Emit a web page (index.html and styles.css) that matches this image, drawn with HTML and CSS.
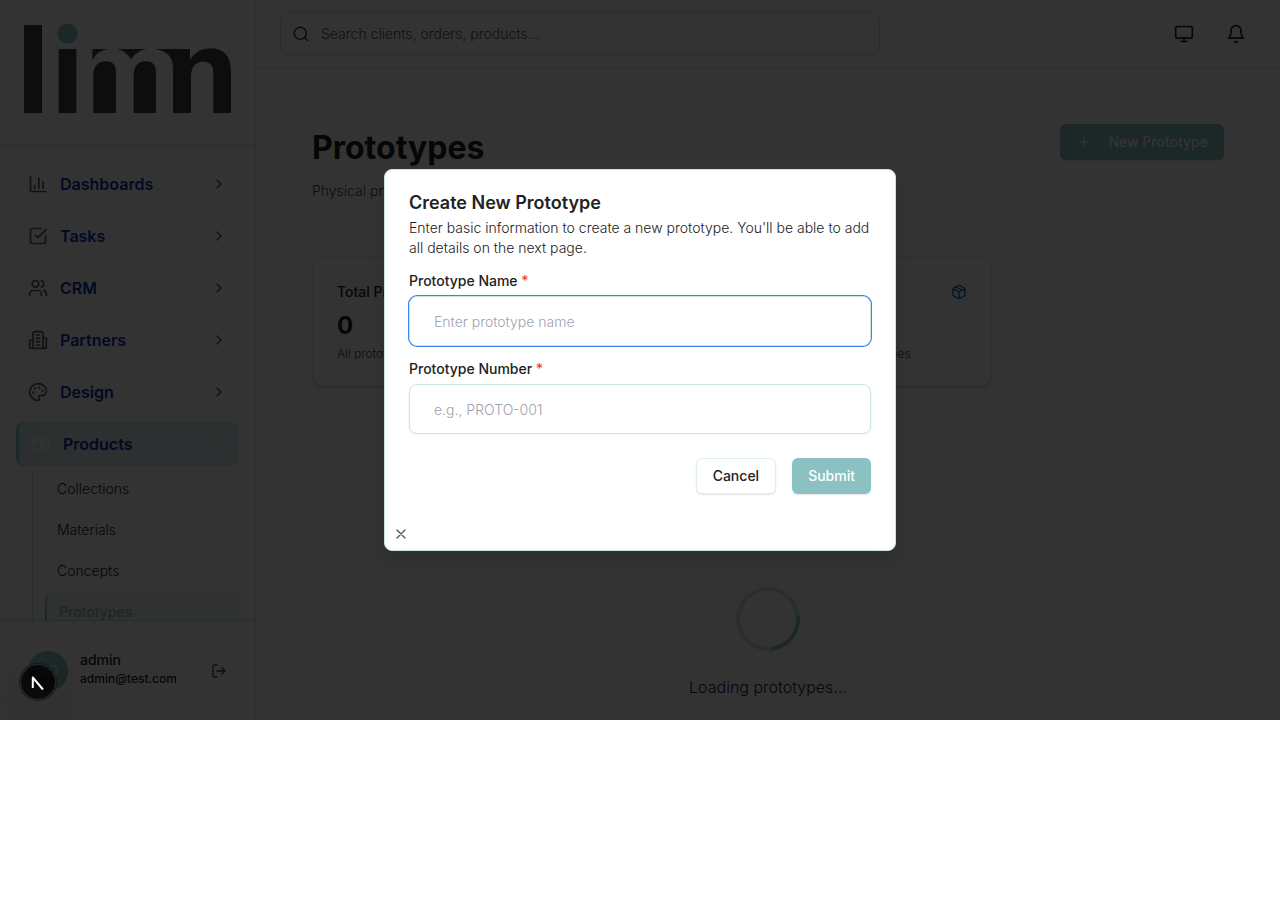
FILE: index.html
```html
<!DOCTYPE html>
<html lang="en">
<head>
<meta charset="utf-8">
<title>Prototypes</title>
<link rel="stylesheet" href="styles.css">
</head>
<body>
<svg class="sprite" aria-hidden="true">
  <symbol id="chevron" viewBox="0 0 24 24"><path d="m9 18 6-6-6-6"/></symbol>
  <symbol id="box" viewBox="0 0 24 24"><path d="m7.5 4.27 9 5.15M21 8a2 2 0 0 0-1-1.73l-7-4a2 2 0 0 0-2 0l-7 4A2 2 0 0 0 3 8v8a2 2 0 0 0 1 1.73l7 4a2 2 0 0 0 2 0l7-4A2 2 0 0 0 21 16ZM3.3 7l8.7 5 8.7-5M12 22V12"/></symbol>
</svg>
<div class="shell">
  <aside class="sidebar">
    <div class="brand">
      <svg class="logo" viewBox="72 72 621 291" role="img" aria-label="limn">
        <path d="M72 75h54v264H72zM176 147h53v192h-53z"/>
        <circle class="logo-dot" cx="203" cy="101" r="30"/>
        <path d="M277 147h48q-33 5-48 33zM350 147h90q-31 5-47 31-14-26-43-31z"/>
        <path d="M280 339V228q0-44 38-44 30 0 30 33v122zM401 339V228q0-44 36-44 31 0 31 33v122z"/>
        <path d="M465 147h105v33q20-35 60-35 63 0 63 70v124h-53V219q0-34-30-34-37 0-37 46v108h-54V205q0-50-54-58z"/>
      </svg>
    </div>
    <nav class="nav">
      <a class="nav-item" href="#"><svg class="icon" viewBox="0 0 24 24"><path d="M3 3v18h18M18 17V9M13 17V5M8 17v-3"/></svg><span>Dashboards</span><svg class="chev"><use href="#chevron"/></svg></a>
      <a class="nav-item" href="#"><svg class="icon" viewBox="0 0 24 24"><path d="m9 11 3 3L22 4M21 12v7a2 2 0 0 1-2 2H5a2 2 0 0 1-2-2V5a2 2 0 0 1 2-2h11"/></svg><span>Tasks</span><svg class="chev"><use href="#chevron"/></svg></a>
      <a class="nav-item" href="#"><svg class="icon" viewBox="0 0 24 24"><path d="M16 21v-2a4 4 0 0 0-4-4H6a4 4 0 0 0-4 4v2M22 21v-2a4 4 0 0 0-3-3.87M16 3.13a4 4 0 0 1 0 7.75"/><circle cx="9" cy="7" r="4"/></svg><span>CRM</span><svg class="chev"><use href="#chevron"/></svg></a>
      <a class="nav-item" href="#"><svg class="icon" viewBox="0 0 24 24"><path d="M6 22V4a2 2 0 0 1 2-2h8a2 2 0 0 1 2 2v18ZM6 12H4a2 2 0 0 0-2 2v6a2 2 0 0 0 2 2h2M18 9h2a2 2 0 0 1 2 2v9a2 2 0 0 1-2 2h-2M10 6h4M10 10h4M10 14h4M10 18h4"/></svg><span>Partners</span><svg class="chev"><use href="#chevron"/></svg></a>
      <a class="nav-item" href="#"><svg class="icon" viewBox="0 0 24 24"><circle cx="13.5" cy="6.5" r=".5"/><circle cx="17.5" cy="10.5" r=".5"/><circle cx="8.5" cy="7.5" r=".5"/><circle cx="6.5" cy="12.5" r=".5"/><path d="M12 2C6.5 2 2 6.5 2 12s4.500 10 10 10c.926 0 1.648-.746 1.648-1.688 0-.437-.18-.835-.437-1.125-.29-.289-.438-.652-.438-1.125a1.640 1.640 0 0 1 1.668-1.668h1.996c3.051 0 5.555-2.503 5.555-5.554C21.965 6.012 17.461 2 12 2z"/></svg><span>Design</span><svg class="chev"><use href="#chevron"/></svg></a>
      <a class="nav-item nav-item-open" href="#"><svg class="icon"><use href="#box"/></svg><span>Products</span><svg class="chev" viewBox="0 0 24 24"><path d="m6 9 6 6 6-6"/></svg></a>
      <div class="subnav">
        <a href="#">Collections</a>
        <a href="#">Materials</a>
        <a href="#">Concepts</a>
        <a class="current" href="#">Prototypes</a>
      </div>
    </nav>
    <div class="account">
      <div class="avatar">AD</div>
      <div class="account-text"><div class="account-name">admin</div><div class="account-mail">admin@test.com</div></div>
      <button class="bare logout" aria-label="Log out"><svg class="chev" viewBox="0 0 24 24"><path d="M9 21H5a2 2 0 0 1-2-2V5a2 2 0 0 1 2-2h4M16 17l5-5-5-5M21 12H9"/></svg></button>
    </div>
  </aside>
  <div class="page">
    <header class="topbar">
      <label class="search">
        <svg class="search-icon" viewBox="0 0 24 24"><circle cx="11" cy="11" r="8"/><path d="m21 21-4.300-4.300"/></svg>
        <input type="text" aria-label="Search" placeholder="Search clients, orders, products...">
      </label>
      <div class="tools">
        <button class="bare" aria-label="Display"><svg class="icon" viewBox="0 0 24 24"><rect x="2" y="3" width="20" height="14" rx="2"/><path d="M8 21h8M12 17v4"/></svg></button>
        <button class="bare" aria-label="Notifications"><svg class="icon" viewBox="0 0 24 24"><path d="M6 8a6 6 0 0 1 12 0c0 7 3 9 3 9H3s3-2 3-9M10.300 21a1.940 1.940 0 0 0 3.400 0"/></svg></button>
      </div>
    </header>
    <main class="main">
      <div class="heading">
        <div>
          <h1>Prototypes</h1>
          <p>Physical prototypes</p>
        </div>
        <button class="btn btn-primary btn-new"><svg class="chev" viewBox="0 0 24 24"><path d="M5 12h14M12 5v14"/></svg>New Prototype</button>
      </div>
      <div class="stats">
        <section class="stat"><div class="stat-top"><h2>Total Prototypes</h2></div><strong>0</strong><p>All prototypes</p></section>
        <section class="stat"></section>
        <section class="stat"><div class="stat-top"><h2>Ready</h2><svg class="chev"><use href="#box"/></svg></div><strong>0</strong><p>Physical prototypes</p></section>
      </div>
      <div class="loading"><div class="spinner"></div><p>Loading prototypes...</p></div>
    </main>
  </div>
  <div class="overlay">
    <div class="dialog" role="dialog" aria-labelledby="dialog-title">
      <h2 id="dialog-title">Create New Prototype</h2>
      <p class="dialog-text">Enter basic information to create a new prototype. You'll be able to add all details on the next page.</p>
      <form class="form">
        <div class="field"><label for="name">Prototype Name <span>*</span></label><input class="focused" id="name" type="text" placeholder="Enter prototype name"></div>
        <div class="field"><label for="number">Prototype Number <span>*</span></label><input id="number" type="text" placeholder="e.g., PROTO-001"></div>
        <div class="actions"><button type="button" class="btn btn-outline">Cancel</button><button type="button" class="btn btn-primary">Submit</button></div>
      </form>
      <button class="bare close" aria-label="Close"><svg class="chev" viewBox="0 0 24 24"><path d="M18 6 6 18M6 6l12 12"/></svg></button>
    </div>
  </div>
  <button class="dev-badge" aria-label="Developer tools">
    <svg viewBox="0 0 36 36"><path d="M12.800 24V13.500L23 25.500"/></svg>
  </button>
</div>
</body>
</html>
```

FILE: styles.css
```css
:root {
  --teal: #8bc1c1;
  --line: #c4dfdf;
  --line-soft: #d2e4e4;
  --line-faint: #e0f0ee;
  --ink: #222;
  --page-foot: 179px;
}
* { box-sizing: border-box; }
body {
  margin: 0;
  background: #fff;
  color: var(--ink);
  font: 300 14px/20px Inter, "Liberation Sans", sans-serif;
}
h1, h2, p { margin: 0; }
a { color: inherit; text-decoration: none; }
input, button { font: inherit; color: inherit; }
svg { display: block; flex: none; fill: none; stroke: currentColor; stroke-width: 2; stroke-linecap: round; stroke-linejoin: round; }
.sprite { position: absolute; width: 0; height: 0; }
.icon { width: 20px; height: 20px; }
.chev { width: 16px; height: 16px; }
.search-icon { width: 18px; height: 18px; }
.bare { display: block; padding: 0; border: 0; background: none; }

.shell { position: relative; display: flex; height: calc(100vh - var(--page-foot)); min-height: 560px; }

.sidebar { display: flex; flex-direction: column; flex: none; width: 256px; border-right: 1px solid var(--line-soft); }
.brand { padding: 24px; border-bottom: 1px solid var(--line); }
.logo { width: 100%; fill: #444; stroke: none; }
.logo-dot { fill: var(--teal); }
.nav { display: flex; flex: 1; flex-direction: column; gap: 8px; min-height: 0; padding: 16px; overflow: hidden; }
.nav-item { display: flex; flex: none; align-items: center; gap: 12px; height: 44px; padding: 0 12px; border-radius: 8px; color: #5a5a5a; }
.nav-item span { flex: 1; font-size: 16px; font-weight: 600; color: #0f2fae; }
.nav-item-open { border-left: 3px solid var(--teal); background: linear-gradient(90deg, #d8eced, #e2f0f0); color: #fff; }
.subnav { display: flex; flex: none; flex-direction: column; gap: 4px; margin: -4px 0 0 16px; padding-left: 12px; border-left: 1px solid var(--line); }
.subnav a { flex: none; padding: 8px 12px; border-radius: 8px; line-height: 21px; }
.subnav .current { border-left: 2px solid var(--teal); background: #f0f7f6; color: var(--teal); font-weight: 500; }
.account { display: flex; flex: none; align-items: center; gap: 12px; padding: 29px 28px; border-top: 1px solid var(--line); font-weight: 500; }
.avatar { display: grid; place-items: center; width: 40px; height: 40px; border-radius: 50%; background: var(--teal); color: #cfe5e5; }
.account-text { flex: 1; padding-bottom: 4px; }
.account-mail { font-size: 12px; line-height: 17px; }
.logout { color: #444; }

.page { display: flex; flex: 1; flex-direction: column; min-width: 0; }
.topbar { display: flex; align-items: center; justify-content: space-between; gap: 24px; padding: 12px 34px 12px 24px; border-bottom: 1px solid var(--line-soft); }
.search { display: flex; flex: 0 1 600px; align-items: center; gap: 11px; height: 43px; padding: 0 11px; border: 1px solid var(--line); border-radius: 8px; color: #444; }
.search input { flex: 1; min-width: 0; padding: 0; border: 0; outline: 0; background: none; }
.search input::placeholder { color: #555; opacity: 1; }
.tools { display: flex; gap: 32px; }
.main { flex: 1; min-height: 0; padding: 56px; overflow: hidden; }
.heading { display: flex; align-items: flex-start; justify-content: space-between; }
h1 { font-size: 32px; font-weight: 700; line-height: 48px; }
.heading p { margin-top: 9px; color: #444; }
.stats { display: grid; grid-template-columns: repeat(4, 1fr); gap: 16px; margin-top: 56px; }
.stat { min-height: 130px; padding: 24px; border: 1px solid var(--line-soft); border-radius: 12px; box-shadow: 0 1px 2px var(--line); }
.stat-top { display: flex; align-items: center; justify-content: space-between; height: 20px; color: #0f6fc4; }
.stat h2 { font-size: 14px; font-weight: 500; color: var(--ink); }
.stat strong { display: block; margin-top: 8px; font-size: 24px; font-weight: 700; line-height: 32px; }
.stat p { margin-top: 4px; font-size: 12px; line-height: 16px; white-space: nowrap; color: #444; }
.loading { display: flex; flex-direction: column; align-items: center; gap: 24px; margin-top: 200px; font-size: 16px; line-height: 24px; }
.spinner { width: 64px; height: 64px; border: 4px solid var(--line-soft); border-right-color: var(--teal); border-radius: 50%; transform: rotate(39deg); }

.btn { display: flex; align-items: center; height: 36px; padding: 0 16px; border: 0; border-radius: 6px; font-weight: 500; box-shadow: 0 1px 2px rgba(0, 0, 0, .1); }
.btn-primary { background: var(--teal); color: #fff; }
.btn-new { gap: 16px; }
.btn-outline { border: 1px solid var(--line-faint); background: #fff; }

.overlay { position: absolute; inset: 0; display: grid; place-items: center; background: rgba(0, 0, 0, .8); }
.dialog { position: relative; width: 512px; max-width: 100%; padding: 24px 24px 56px; border: 1px solid #c9e4e4; border-radius: 8px; background: #fff; box-shadow: 0 10px 15px -3px rgba(0, 0, 0, .1); }
.dialog h2 { font-size: 18px; font-weight: 600; line-height: 18px; }
.dialog-text { margin-top: 6px; }
.form { display: flex; flex-direction: column; gap: 16px; margin-top: 16px; }
.field { display: flex; flex-direction: column; gap: 8px; }
.field label { font-weight: 500; line-height: 14px; }
.field span { color: #ef4444; }
.field input { height: 50px; padding: 0 24px; border: 1px solid #c9e4e4; border-radius: 8px; outline: 0; box-shadow: 0 1px 2px rgba(0, 0, 0, .05); }
.field input::placeholder { color: #9ca3af; opacity: 1; }
.field .focused { box-shadow: 0 0 0 1px #3b82f6; }
.actions { display: flex; justify-content: flex-end; gap: 16px; margin-top: 8px; }
.close { position: absolute; bottom: 8px; left: 8px; color: #555; }

.dev-badge { position: absolute; bottom: 20px; left: 20px; width: 36px; height: 36px; padding: 0; border: 0; border-radius: 50%; background: rgba(0, 0, 0, .8); box-shadow: 0 0 0 1px #171717, inset 0 0 0 1px rgba(255, 255, 255, .14), 0 16px 32px -8px rgba(0, 0, 0, .24); }
.dev-badge path { stroke: #fff; stroke-width: 2; stroke-linecap: butt; }
```
